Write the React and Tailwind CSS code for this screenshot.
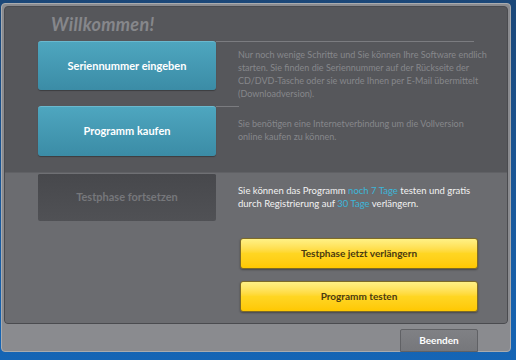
export default function App() {
  const font = { fontFamily: 'Lato, "Noto Sans", sans-serif' };
  return (
    <div
      className="w-[516px] h-[360px] bg-gradient-to-b from-[#1b4778] to-[#1565b5] pt-[3px] pr-[5px] pb-[8px] pl-[1px] flex overflow-hidden"
      style={font}
    >
      <div className="flex-1 flex flex-col bg-[#8a8b8f] border border-[#a9abae] rounded-[4px] p-[2px] pb-0">
        {/* main panel */}
        <div className="h-[318px] bg-[#56575b] rounded-[4px] border border-[#4a4b4f] flex flex-col overflow-hidden">
          <div className="h-[34px] pl-[46px] pt-[6px]">
            <h1 className="text-[18px] font-bold italic text-[#86878b] leading-[22px] tracking-[0.3px]">Willkommen!</h1>
          </div>

          {/* row 1 */}
          <div className="flex h-[65px]">
            <button className="ml-[33px] w-[178px] h-[49px] rounded-[3px] bg-gradient-to-b from-[#4ea6bf] to-[#3b8ca6] border-t border-[#6ab9cf] text-white text-[11px] font-bold shadow-[0_1px_1px_rgba(0,0,0,0.3)]">
              Seriennummer eingeben
            </button>
            <div className="flex-1 flex flex-col">
              <div className="h-px bg-[#7b7c80] w-[258px]" />
              <p className="ml-[22px] mt-[6px] w-[262px] text-[9px] leading-[13px] text-[#86878b]">
                Nur noch wenige Schritte und Sie können Ihre Software endlich starten. Sie finden die Seriennummer auf der Rückseite der CD/DVD-Tasche oder sie wurde Ihnen per E-Mail übermittelt (Downloadversion).
              </p>
            </div>
          </div>

          {/* row 2 */}
          <div className="flex h-[66px]">
            <button className="ml-[33px] w-[178px] h-[50px] rounded-[3px] bg-gradient-to-b from-[#4ea6bf] to-[#3b8ca6] border-t border-[#6ab9cf] text-white text-[11px] font-bold shadow-[0_1px_1px_rgba(0,0,0,0.3)]">
              Programm kaufen
            </button>
            <div className="flex-1 flex flex-col">
              <div className="h-px bg-[#7b7c80] w-[23px]" />
              <p className="ml-[22px] mt-[10px] w-[240px] text-[9px] leading-[13px] text-[#86878b]">
                Sie benötigen eine Internetverbindung um die Vollversion online kaufen zu können.
              </p>
            </div>
          </div>

          {/* lower section */}
          <div className="flex-1 bg-[#6b6c70] border-t border-[#606165] flex flex-col">
            <div className="flex">
              <button className="ml-[33px] w-[178px] h-[48px] rounded-[2px] bg-gradient-to-b from-[#47484c] to-[#505155] border-t border-[#6f7074] text-[#76777b] text-[11px] font-bold">
                Testphase fortsetzen
              </button>
              <p className="ml-[22px] mt-[11px] w-[250px] text-[9.5px] leading-[13px] text-[#f2f2f2]">
                Sie können das Programm <span className="text-[#3cb6d9]">noch 7 Tage</span> testen und gratis durch Registrierung auf <span className="text-[#3cb6d9]">30 Tage</span> verlängern.
              </p>
            </div>
            <div className="flex flex-col gap-[12px] ml-[235px] mt-[17px] w-[238px]">
              <button className="h-[31px] rounded-[3px] bg-gradient-to-b from-[#fff185] via-[#ffd622] to-[#ffc800] border border-[#7d6a28] text-[#4a3a12] text-[10px] font-bold shadow-[0_1px_2px_rgba(0,0,0,0.35)]">
                Testphase jetzt verlängern
              </button>
              <button className="h-[31px] rounded-[3px] bg-gradient-to-b from-[#fff185] via-[#ffd622] to-[#ffc800] border border-[#7d6a28] text-[#4a3a12] text-[10px] font-bold shadow-[0_1px_2px_rgba(0,0,0,0.35)]">
                Programm testen
              </button>
            </div>
          </div>
        </div>

        {/* bottom bar */}
        <div className="flex-1 flex justify-end items-end pr-[30px]">
          <button className="w-[78px] h-[23px] mb-[-1px] rounded-t-[2px] bg-gradient-to-b from-[#808185] to-[#76777b] border border-[#606165] text-white text-[10px] font-bold">
            Beenden
          </button>
        </div>
      </div>
    </div>
  );
}
